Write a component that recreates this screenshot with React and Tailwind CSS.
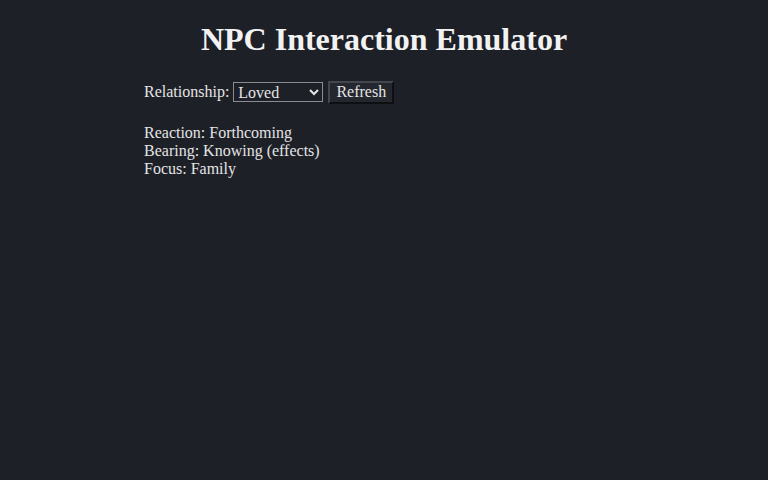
export default function App() {
  return (
    <div className="min-h-[480px] bg-[#1e2028] text-[#e4e4e4] font-['Liberation_Serif',serif] text-base">
      <h1 className="pt-[21px] text-center text-[32px] leading-[37px] font-bold text-[#f2f2f2]">
        NPC Interaction Emulator
      </h1>

      <div className="mx-auto w-[480px] mt-[22px]">
        <div className="flex items-center h-[24px]">
          <label className="mr-[4px]">Relationship:</label>
          <select
            defaultValue="Loved"
            className="w-[90px] h-[20px] bg-[#1e2028] text-[#e4e4e4] border border-[#8a8c92] text-base leading-[18px] pl-0 font-['Liberation_Serif',serif]"
          >
            <option>Hated</option>
            <option>Disliked</option>
            <option>Neutral</option>
            <option>Liked</option>
            <option>Loved</option>
          </select>
          <button className="ml-[5px] h-[23px] w-[66px] bg-[#25272e] border-2 border-t-[#45474e] border-l-[#45474e] border-r-[#0e0f12] border-b-[#0e0f12] text-base leading-[18px] text-[#e4e4e4]">
            Refresh
          </button>
        </div>

        <div className="mt-[20px] leading-[18px]">
          <div>Reaction: Forthcoming</div>
          <div>Bearing: Knowing (effects)</div>
          <div>Focus: Family</div>
        </div>
      </div>
    </div>
  )
}
